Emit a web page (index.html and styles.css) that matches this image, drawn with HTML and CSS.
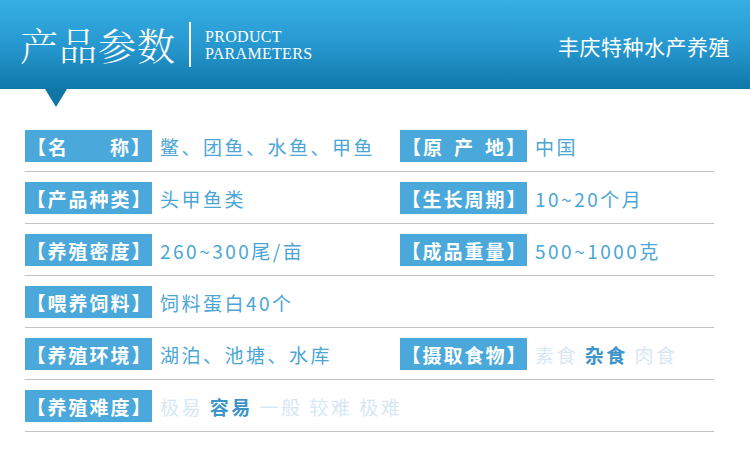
FILE: index.html
```html
<!DOCTYPE html>
<html lang="zh-CN">
<head>
<meta charset="utf-8">
<title>产品参数</title>
<link rel="stylesheet" href="styles.css">
</head>
<body>
<header class="hero">
  <div class="title-group">
    <h1 class="title">产品参数</h1>
    <div class="divider"></div>
    <div class="en">PRODUCT<br>PARAMETERS</div>
  </div>
  <div class="brand">丰庆特种水产养殖</div>
</header>
<section class="params">
  <div class="row">
    <div class="cell"><span class="label">【名<span class="gap-wide"></span>称】</span><span class="value">鳖、团鱼、水鱼、甲鱼</span></div>
    <div class="cell"><span class="label">【原<span class="gap"></span>产<span class="gap"></span>地】</span><span class="value">中国</span></div>
  </div>
  <div class="row">
    <div class="cell"><span class="label">【产品种类】</span><span class="value">头甲鱼类</span></div>
    <div class="cell"><span class="label">【生长周期】</span><span class="value">10~20个月</span></div>
  </div>
  <div class="row">
    <div class="cell"><span class="label">【养殖密度】</span><span class="value">260~300尾/亩</span></div>
    <div class="cell"><span class="label">【成品重量】</span><span class="value">500~1000克</span></div>
  </div>
  <div class="row">
    <div class="cell"><span class="label">【喂养饲料】</span><span class="value">饲料蛋白40个</span></div>
    <div class="cell"></div>
  </div>
  <div class="row">
    <div class="cell"><span class="label">【养殖环境】</span><span class="value">湖泊、池塘、水库</span></div>
    <div class="cell"><span class="label">【摄取食物】</span><span class="value options"><span class="opt">素食</span> <span class="opt on">杂食</span> <span class="opt">肉食</span></span></div>
  </div>
  <div class="row">
    <div class="cell"><span class="label">【养殖难度】</span><span class="value options"><span class="opt">极易</span> <span class="opt on">容易</span> <span class="opt">一般</span> <span class="opt">较难</span> <span class="opt">极难</span></span></div>
    <div class="cell"></div>
  </div>
</section>
</body>
</html>
```

FILE: styles.css
```css
* { box-sizing: border-box; }
html, body { margin: 0; padding: 0; background: #ffffff; }
body {
  width: 750px;
  font-family: "Noto Sans CJK SC", "Noto Sans", sans-serif;
}
.hero {
  position: relative;
  height: 89px;
  display: flex;
  align-items: center;
  justify-content: space-between;
  padding: 0 20px 0 20px;
  background: linear-gradient(to bottom, #36afe5 0%, #2596cd 55%, #0f77a8 100%);
  color: #ffffff;
}
.hero::after {
  content: "";
  position: absolute;
  left: 45px;
  top: 89px;
  border-left: 11px solid transparent;
  border-right: 11px solid transparent;
  border-top: 18px solid #0f76a6;
}
.title-group {
  display: flex;
  align-items: center;
}
.title {
  margin: 0 0 2px 0;
  font-family: "Noto Serif CJK SC", "Noto Sans CJK SC", serif;
  font-weight: 300;
  font-size: 38px;
  letter-spacing: 1px;
  line-height: 1;
  color: #ffffff;
}
.divider {
  width: 2px;
  height: 45px;
  background: #ffffff;
  margin: 0 14px 0 13px;
}
.en {
  font-family: "Liberation Serif", serif;
  font-size: 16px;
  letter-spacing: 0.3px;
  line-height: 17px;
  padding-top: 1px;
}
.brand {
  font-size: 21px;
  letter-spacing: 0.5px;
  line-height: 1;
  padding-top: 4px;
}
.params {
  margin: 41px 36px 0 25px;
}
.row {
  display: grid;
  grid-template-columns: 375px 1fr;
  padding-bottom: 9px;
  border-bottom: 1px solid #c2c2c2;
  margin-bottom: 10px;
}
.cell {
  display: flex;
  align-items: center;
  height: 32px;
}
.label {
  flex: none;
  width: 127px;
  height: 32px;
  display: flex;
  align-items: center;
  justify-content: center;
  background: #4aa8da;
  color: #ffffff;
  font-size: 19px;
  font-weight: 700;
  letter-spacing: 2px;
  white-space: nowrap;
  padding-left: 2px;
}
.gap { display: inline-block; width: 11px; }
.gap-wide { display: inline-block; width: 42px; }
.value {
  margin-left: 8px;
  font-size: 19px;
  letter-spacing: 2.5px;
  color: #4ba6d6;
  white-space: nowrap;
}
.opt { color: #d6e8f4; }
.opt.on { color: #3d94c8; font-weight: 700; }
```
